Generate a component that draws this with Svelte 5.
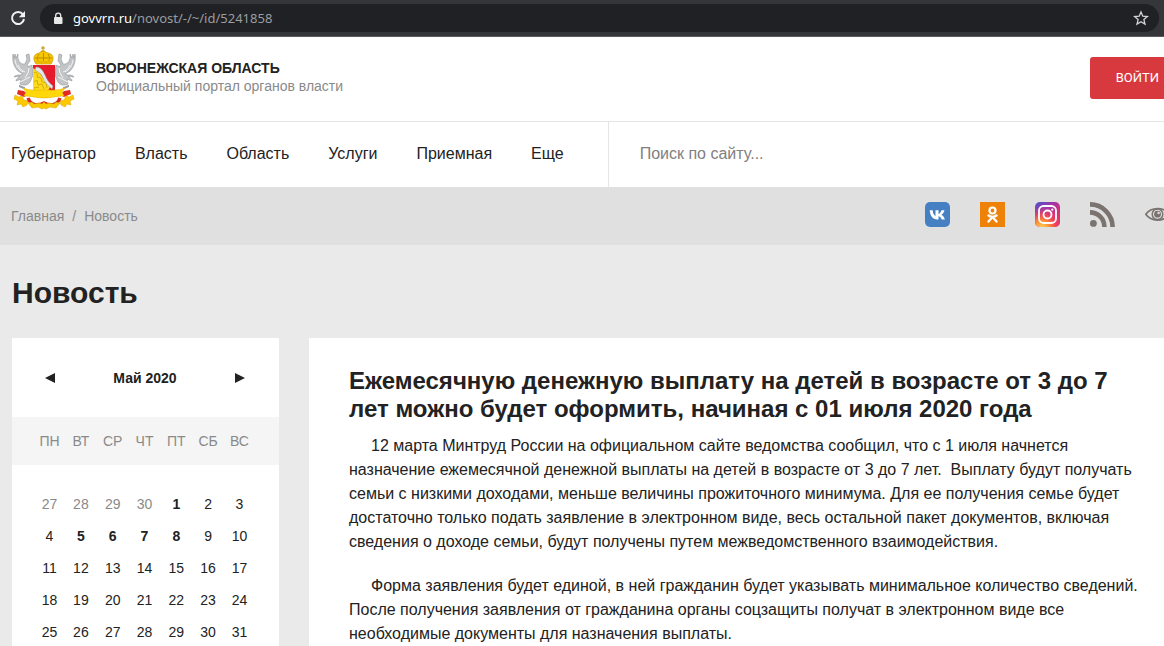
<script>
  const menu = ['Губернатор', 'Власть', 'Область', 'Услуги', 'Приемная', 'Еще'];
  const weekdays = ['ПН', 'ВТ', 'СР', 'ЧТ', 'ПТ', 'СБ', 'ВС'];
  const weeks = [
    [27, 28, 29, 30, 1, 2, 3],
    [4, 5, 6, 7, 8, 9, 10],
    [11, 12, 13, 14, 15, 16, 17],
    [18, 19, 20, 21, 22, 23, 24],
    [25, 26, 27, 28, 29, 30, 31]
  ];
  const newsDays = [1, 5, 6, 7, 8];
  const isPrevMonth = (week, day) => week === 0 && day > 7;
  let query = $state('');
</script>

<div class="page">
  <div class="browser">
    <button class="icon-button" aria-label="Обновить">
      <svg width="16" height="16" viewBox="0 0 16 16" fill="none">
        <path d="M13 4.6A6 6 0 1 0 14 9" stroke="#f1f1f1" stroke-width="2" />
        <path d="M15 1v6.200H8.800z" fill="#f1f1f1" />
      </svg>
    </button>
    <div class="address">
      <svg width="10" height="13" viewBox="0 0 10 13">
        <rect x="1" y="5" width="8.500" height="7" rx="1" fill="#e8e8e8" />
        <path d="M2.700 6V3.600a2.500 2.500 0 0 1 5 0V6" fill="none" stroke="#e8e8e8" stroke-width="1.300" />
      </svg>
      <span class="url"><b>govvrn.ru</b>/novost/-/~/id/5241858</span>
      <button class="icon-button" aria-label="В закладки">
        <svg width="16" height="16" viewBox="0 0 16 16">
          <path d="M8 2l1.800 4.200 4.600.4-3.500 3 1.100 4.500L8 11.700l-4 2.400 1.100-4.500-3.500-3 4.600-.4z" fill="none" stroke="#d5d5d5" stroke-width="1.300" />
        </svg>
      </button>
    </div>
  </div>

  <header>
    <a class="brand" href="#home">
      <svg width="66" height="64" viewBox="0 0 66 64">
        <g fill="#c2c4c6" stroke="#8f9295" stroke-width=".6">
          <path d="M2 8c-1 7 1 13 5 17l5 3c-3 2-7 0-9 3l6-1c-2 2-4 3-4 5l5-2-1 5c5 2 8 1 10-2l3-7-1-10c-2 1-4 2-5 0l3-4-1-7-3 1 1 4-2 5C9 19 6 14 7 8L5 12 4 8 3 12z" />
          <path d="M64 8c1 7-1 13-5 17l-5 3c3 2 7 0 9 3l-6-1c2 2 4 3 4 5l-5-2 1 5c-5 2-8 1-10-2l-3-7 1-10c2 1 4 2 5 0l-3-4 1-7 3 1-1 4 2 5c5 1 8-4 7-10l2 4 1-4 1 4z" />
        </g>
        <g fill="none" stroke="#f4f4f4" stroke-width="1">
          <path d="M4 14c1 6 4 10 8 12M7 19c2 4 4 6 7 7M18 22l-1 5-3 5M9 36l6-3 4-2M62 14c-1 6-4 10-8 12M59 19c-2 4-4 6-7 7M48 22l1 5 3 5M57 36l-6-3-4-2" />
        </g>
        <path d="M8 40c2 0 3 2 6 2M58 40c-2 0-3 2-6 2" stroke="#999da0" stroke-width="2" fill="none" />
        <path d="M22 19h22v26H22z" fill="#e51c2b" />
        <path d="M22 22l5 3 12 16-2 4H22z" fill="#fddb1c" />
        <path d="M23 27c3-2 4 1 3 4l4 1 1 4 4 1 1 5M23 36l3-2 1 5 4-1 2 5M23 42l5-1" fill="none" stroke="#d7ab08" stroke-width="1" />
        <path d="M25 21c5 0 7 4 9 8 2 5 4 8 8 11l-1 3c-5-4-7-7-9-11-2-5-5-6-8-8z" fill="#e4e8ec" stroke="#93999f" stroke-width=".5" />
        <path d="M25 18c-4-6-2-10 3-11l2-1V5h4v1l3 1c5 1 7 5 3 11z" fill="#f7c800" stroke="#c99800" stroke-width=".7" />
        <path d="M32 0v6M30 2h4M28 8c-2 3-2 6 0 8M32.500 7v9M37 8c2 3 2 6 0 8M24 12h17" fill="none" stroke="#be8c00" stroke-width="1" />
        <path d="M24 15h17v3H24z" fill="#e9b800" />
        <path d="M7 44l6 1 4 4-4 2-7-3zM59 44l-6 1-4 4 4 2 7-3z" fill="#e22b22" />
        <path d="M12 42c8 3 14 2 21 2s13 1 21-2l-3 4 2 4c-7 0-12 2-20 2s-13-2-20-2l2-4z" fill="#ffd70a" stroke="#dfae00" stroke-width=".5" />
        <path d="M4 49l4 2 3-1 2 4 4 1-1 4-4 2-2-3-4 1 1-4-4-2zM62 49l-4 2-3-1-2 4-4 1 1 4 4 2 2-3 4 1-1-4 4-2z" fill="#ffc800" stroke="#d6a400" stroke-width=".5" />
        <path d="M17 52c3 8 10 8 16 5 6 3 13 3 16-5" fill="none" stroke="#db2824" stroke-width="3.500" />
        <path d="M17 57l4-1 2 2 5-1 3 1 2-2 2 2 3-1 5 1 2-2 4 1-4 5-6-1-4 2-2-1-2 1-4-2-6 1z" fill="#f8cb00" stroke="#d29d00" stroke-width=".5" />
      </svg>
      <span class="brand-text">
        <strong>ВОРОНЕЖСКАЯ ОБЛАСТЬ</strong>
        <span>Официальный портал органов власти</span>
      </span>
    </a>
    <button class="login">ВОЙТИ</button>
  </header>

  <div class="menu-row">
    <nav aria-label="Главное меню">
      {#each menu as item}<a href="#menu">{item}</a>{/each}
    </nav>
    <input type="search" aria-label="Поиск по сайту" placeholder="Поиск по сайту..." bind:value={query} />
  </div>

  <div class="crumb-row">
    <div class="crumbs"><a href="#home">Главная</a><span>/</span><span>Новость</span></div>
    <div class="social">
      <a href="#vk" aria-label="ВКонтакте">
        <svg width="25" height="25" viewBox="0 0 25 25">
          <rect width="25" height="25" rx="5" fill="#4680c2" />
          <path d="M12.200 17.500C7.800 17.500 5.200 14.300 4.700 8.300h3c.2 3.300 1.300 5 2.800 5.800V8.300h3v3.600c1.500-.3 2.500-1.900 3-3.600h3c-.5 2-1.800 3.600-3.100 4.400 1.500.8 2.800 2.400 3.500 4.800h-3.200c-.6-1.700-1.700-2.900-3.200-3.200v3.200z" fill="#fff" />
        </svg>
      </a>
      <a href="#ok" aria-label="Одноклассники">
        <svg width="25" height="25" viewBox="0 0 25 25">
          <path fill="#ee8208" d="M0 0h25v25H0z" />
          <circle cx="12.500" cy="8.500" r="3" fill="none" stroke="#fff" stroke-width="2.200" />
          <path d="M8.500 13.500c2.500 1.700 5.500 1.700 8 0M12.500 15l-4 4.500M12.500 15l4 4.500" fill="none" stroke="#fff" stroke-width="2.400" stroke-linecap="round" />
        </svg>
      </a>
      <a href="#instagram" aria-label="Instagram">
        <svg width="25" height="25" viewBox="0 0 25 25">
          <defs>
            <linearGradient id="ig-base" x1="0" y1="0" x2="1" y2="1">
              <stop offset="0" stop-color="#4a55c9" /><stop offset=".4" stop-color="#a534a5" /><stop offset=".75" stop-color="#e52d68" /><stop offset="1" stop-color="#e9336b" />
            </linearGradient>
            <radialGradient id="ig-glow" cx=".27" cy="1.050" r=".9">
              <stop offset="0" stop-color="#ffd95a" /><stop offset=".35" stop-color="#fd8c36" /><stop offset=".65" stop-color="#ef4454" stop-opacity=".8" /><stop offset="1" stop-color="#d3309a" stop-opacity="0" />
            </radialGradient>
          </defs>
          <rect width="25" height="25" rx="5" fill="url(#ig-base)" />
          <rect width="25" height="25" rx="5" fill="url(#ig-glow)" />
          <rect x="4" y="4" width="17" height="17" rx="4.500" fill="none" stroke="#fff" stroke-width="1.800" />
          <circle cx="12.500" cy="12.500" r="4" fill="none" stroke="#fff" stroke-width="1.800" />
          <circle cx="17.300" cy="7.700" r="1.100" fill="#fff" />
        </svg>
      </a>
      <a href="#rss" aria-label="RSS">
        <svg width="25" height="25" viewBox="0 0 25 25">
          <circle cx="3.400" cy="21.400" r="3.400" fill="#7a7370" />
          <path d="M0 10.400A14.400 14.400 0 0 1 14.400 25M0 2.400A22.600 22.600 0 0 1 22.600 25" fill="none" stroke="#7a7370" stroke-width="4.600" />
        </svg>
      </a>
      <a href="#vision" aria-label="Версия для слабовидящих">
        <svg width="25" height="25" viewBox="0 0 25 25">
          <path d="M.8 12.300C6 4.600 19 4.600 24.200 12.300 19 20 6 20 .8 12.300z" fill="none" stroke="#7a7370" stroke-width="1.700" />
          <circle cx="12.500" cy="12.200" r="5.300" fill="none" stroke="#7a7370" stroke-width="1.500" />
          <circle cx="12.500" cy="12.200" r="3.400" fill="#7a7370" />
          <circle cx="13.600" cy="10.900" r="1.200" fill="#e0e0e0" />
        </svg>
      </a>
    </div>
  </div>

  <main>
    <h1>Новость</h1>
    <div class="columns">
      <aside>
        <div class="month">
          <button aria-label="Предыдущий месяц"><svg width="10" height="10" viewBox="0 0 10 10"><path d="M10 0v10L0 5z" fill="#222" /></svg></button>
          <strong>Май 2020</strong>
          <button aria-label="Следующий месяц"><svg width="10" height="10" viewBox="0 0 10 10"><path d="M0 0v10l10-5z" fill="#222" /></svg></button>
        </div>
        <table>
          <thead>
            <tr>{#each weekdays as day}<th scope="col">{day}</th>{/each}</tr>
          </thead>
          <tbody>
            {#each weeks as week, w}
              <tr>
                {#each week as day}
                  <td class:muted={isPrevMonth(w, day)} class:news={w < 2 && newsDays.includes(day)}>{day}</td>
                {/each}
              </tr>
            {/each}
          </tbody>
        </table>
      </aside>
      <article>
        <h2>Ежемесячную денежную выплату на детей в возрасте от 3 до 7 лет можно будет оформить, начиная с 01 июля 2020 года</h2>
        <p>12 марта Минтруд России на официальном сайте ведомства сообщил, что с 1 июля начнется назначение ежемесячной денежной выплаты на детей в возрасте от 3 до 7 лет.&nbsp; Выплату будут получать семьи с низкими доходами, меньше величины прожиточного минимума. Для ее получения семье будет достаточно только подать заявление в электронном виде, весь остальной пакет документов, включая сведения о доходе семьи, будут получены путем межведомственного взаимодействия.</p>
        <p>Форма заявления будет единой, в ней гражданин будет указывать минимальное количество сведений. После получения заявления от гражданина органы соцзащиты получат в электронном виде все необходимые документы для назначения выплаты.</p>
      </article>
    </div>
  </main>
</div>

<style>
  :global(body) { margin: 0; background: #eaeaea; }
  .page {
    display: flex;
    flex-direction: column;
    min-height: 100vh;
    overflow: hidden;
    font: 16px/24px "Liberation Sans", Arial, sans-serif;
    color: #222;
  }
  a { color: inherit; text-decoration: none; }
  button { border: 0; padding: 0; background: none; font: inherit; color: inherit; cursor: pointer; }
  svg { display: block; flex: none; }

  .browser {
    display: flex;
    align-items: center;
    gap: 14px;
    padding: 4px 5px 4px 10px;
    background: #35363a;
    border-bottom: 1px solid #5a5b5e;
  }
  .address {
    flex: 1;
    display: flex;
    align-items: center;
    gap: 10px;
    height: 28px;
    padding: 0 10px 0 13px;
    border-radius: 14px;
    background: #202124;
  }
  .url { flex: 1; font: 13px/20px "Noto Sans", "Open Sans", sans-serif; color: #9a9da1; }
  .url b { font-weight: 400; color: #fff; }

  header {
    display: flex;
    align-items: center;
    justify-content: space-between;
    height: 82px;
    padding: 0 0 2px 11px;
    background: #fff;
    border-bottom: 1px solid #e5e5e5;
  }
  .brand { display: flex; align-items: center; gap: 19px; }
  .brand-text { display: flex; flex-direction: column; padding-bottom: 2px; font-size: 14px; line-height: 18px; color: #8a8a8a; }
  .brand-text strong { color: #222; }
  .login {
    height: 42px;
    padding: 0 26px;
    margin-right: -21px;
    border-radius: 3px;
    background: #d8393e;
    color: #fff;
    font: 13px/18px Roboto, sans-serif;
  }

  .menu-row { display: flex; background: #fff; }
  nav {
    flex: none;
    display: flex;
    gap: 39px;
    padding: 20px 44px 21px 11px;
    border-right: 1px solid #e5e5e5;
  }
  input {
    flex: 1;
    min-width: 0;
    padding: 0 31px 2px;
    border: 0;
    outline: 0;
    background: none;
    font: inherit;
    color: #222;
  }
  input::placeholder { color: #808080; opacity: 1; }

  .crumb-row {
    display: flex;
    align-items: center;
    justify-content: space-between;
    height: 58px;
    padding-left: 11px;
    background: #e0e0e0;
  }
  .crumbs { display: flex; gap: 8px; font-size: 14px; color: #8a8a8a; }
  .social { display: flex; gap: 30px; margin: 0 -6px 4px 0; }

  main { flex: 1; display: flex; flex-direction: column; padding-left: 12px; }
  h1 { margin: 0; padding: 30px 0 27px; font-size: 30px; line-height: 36px; }
  .columns { flex: 1; display: flex; gap: 30px; }
  aside { flex: none; width: 267px; background: #fff; font-size: 14px; line-height: 18px; }
  .month { display: flex; align-items: center; justify-content: space-between; height: 79px; padding: 0 34px 0 33px; }
  table { width: 100%; border-collapse: collapse; table-layout: fixed; text-align: center; }
  thead { background: #f5f5f5; color: #8a8a8a; }
  tbody::before { content: ""; display: block; height: 23px; }
  th, td { padding: 0; height: 32px; font-weight: 400; }
  th { height: 48px; }
  th:first-child, td:first-child { width: 31px; padding-left: 22px; }
  th:last-child, td:last-child { width: 31px; padding-right: 24px; }
  .muted { color: #8a8a8a; }
  .news { font-weight: 700; }

  article { flex: 1; padding: 29px 24px 0 40px; background: #fff; }
  h2 { margin: 0 0 11px; font-size: 24px; line-height: 28px; }
  p { margin: 0 0 20px; text-indent: 22px; }
</style>
